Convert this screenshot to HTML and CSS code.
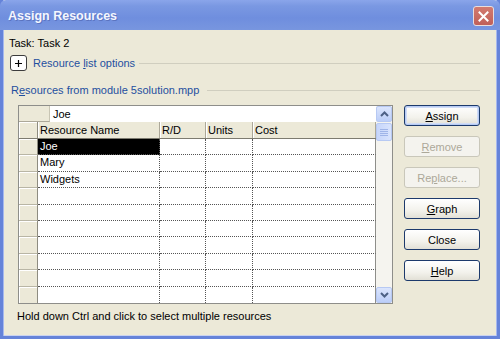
FILE: index.html
```html
<!DOCTYPE html>
<html>
<head>
<meta charset="utf-8">
<link rel="stylesheet" href="styles.css">
</head>
<body>
<div class="window">
  <div class="titlebar">
    <span class="title">Assign Resources</span>
    <span class="close"><svg width="11" height="11" viewBox="0 0 11 11"><path d="M1.5 1.5 L9.5 9.5 M9.5 1.5 L1.5 9.5" stroke="#fff" stroke-width="2" stroke-linecap="square"/></svg></span>
  </div>
  <div class="content">
    <div class="task">Task: Task 2</div>
    <div class="options">
      <span class="plus"><svg width="9" height="9" viewBox="0 0 9 9"><path d="M4.5 1 V8 M1 4.5 H8" stroke="#000" stroke-width="1.2"/></svg></span>
      <span class="link">Resource <u>l</u>ist options</span>
      <span class="rule"></span>
    </div>
    <div class="section">
      <span class="link">R<u>e</u>sources from module 5solution.mpp</span>
      <span class="rule"></span>
    </div>
    <div class="main">
      <div class="left">
        <div class="grid">
          <div class="table">
            <div class="editrow"><span class="corner"></span><span class="edit">Joe</span></div>
            <div class="headrow">
              <span class="rh"></span>
              <span class="hc c-name">Resource Name</span>
              <span class="hc c-rd">R/D</span>
              <span class="hc c-units">Units</span>
              <span class="hc c-cost">Cost</span>
            </div>
            <div class="row"><span class="rh"></span><span class="cell c-name sel">Joe</span><span class="cell c-rd"></span><span class="cell c-units"></span><span class="cell c-cost"></span></div>
            <div class="row"><span class="rh"></span><span class="cell c-name">Mary</span><span class="cell c-rd"></span><span class="cell c-units"></span><span class="cell c-cost"></span></div>
            <div class="row"><span class="rh"></span><span class="cell c-name">Widgets</span><span class="cell c-rd"></span><span class="cell c-units"></span><span class="cell c-cost"></span></div>
            <div class="row"><span class="rh"></span><span class="cell c-name"></span><span class="cell c-rd"></span><span class="cell c-units"></span><span class="cell c-cost"></span></div>
            <div class="row"><span class="rh"></span><span class="cell c-name"></span><span class="cell c-rd"></span><span class="cell c-units"></span><span class="cell c-cost"></span></div>
            <div class="row"><span class="rh"></span><span class="cell c-name"></span><span class="cell c-rd"></span><span class="cell c-units"></span><span class="cell c-cost"></span></div>
            <div class="row"><span class="rh"></span><span class="cell c-name"></span><span class="cell c-rd"></span><span class="cell c-units"></span><span class="cell c-cost"></span></div>
            <div class="row"><span class="rh"></span><span class="cell c-name"></span><span class="cell c-rd"></span><span class="cell c-units"></span><span class="cell c-cost"></span></div>
            <div class="row"><span class="rh"></span><span class="cell c-name"></span><span class="cell c-rd"></span><span class="cell c-units"></span><span class="cell c-cost"></span></div>
            <div class="row last"><span class="rh"></span><span class="cell c-name"></span><span class="cell c-rd"></span><span class="cell c-units"></span><span class="cell c-cost"></span></div>
          </div>
          <div class="scrollbar">
            <span class="sbtn"><svg width="9" height="6" viewBox="0 0 9 6"><path d="M1 5 L4.5 1.5 L8 5" fill="none" stroke="#4d6185" stroke-width="2"/></svg></span>
            <span class="thumb"><i></i><i></i><i></i><i></i></span>
            <span class="track"></span>
            <span class="sbtn"><svg width="9" height="6" viewBox="0 0 9 6"><path d="M1 1 L4.5 4.5 L8 1" fill="none" stroke="#4d6185" stroke-width="2"/></svg></span>
          </div>
        </div>
        <div class="hint">Hold down Ctrl and click to select multiple resources</div>
      </div>
      <div class="buttons">
        <button class="btn default"><u>A</u>ssign</button>
        <button class="btn disabled"><u>R</u>emove</button>
        <button class="btn disabled">Re<u>p</u>lace...</button>
        <button class="btn"><u>G</u>raph</button>
        <button class="btn">Close</button>
        <button class="btn"><u>H</u>elp</button>
      </div>
    </div>
  </div>
</div>
</body>
</html>
```

FILE: styles.css
```css
* { box-sizing: border-box; }
html, body { margin: 0; padding: 0; }
body {
  width: 500px;
  height: 339px;
  overflow: hidden;
  font-family: "Liberation Sans", Arial, sans-serif;
  font-size: 11px;
  color: #000;
  background: #ece9d8;
}
.window {
  width: 500px;
  height: 339px;
  display: flex;
  flex-direction: column;
  border: 3px solid #6583d9;
  border-top: 0;
  background: #ece9d8;
  box-shadow: inset 1px 0 0 #a6b8ee, inset -1px 0 0 #a6b8ee, inset 0 -1px 0 #c9d2f0;
}
.titlebar {
  height: 30px;
  margin: 0 -3px;
  display: flex;
  align-items: center;
  justify-content: space-between;
  padding: 0 6px 0 8px;
  background: linear-gradient(#8aa5ea 0%, #7a98e2 20%, #6f8ede 60%, #7896df 100%);
  border-radius: 6px 6px 0 0;
}
.title {
  color: #f4f6ff;
  font-weight: bold;
  font-size: 12.5px;
  text-shadow: 1px 1px 0 #5b74c0;
  margin-top: 1px;
}
.close {
  width: 21px;
  height: 20px;
  border: 1px solid #e8dede;
  border-radius: 3px;
  background: linear-gradient(#d27a70, #c06058);
  display: flex;
  align-items: center;
  justify-content: center;
  margin-top: 2px;
}
.content {
  flex: 1;
  padding: 6px 8px 0 6px;
  display: flex;
  flex-direction: column;
}
.task { line-height: 14px; height: 14px; }
.options {
  margin-top: 4px;
  height: 18px;
  display: flex;
  align-items: center;
}
.plus {
  width: 17px;
  height: 16px;
  margin-left: 1px;
  border: 1px solid #3c3c3c;
  border-radius: 3px;
  background: #fff;
  display: flex;
  align-items: center;
  justify-content: center;
}
.link { color: #1f4f9f; white-space: nowrap; }
.options .link { margin-left: 6px; }
.rule {
  flex: 1;
  height: 1px;
  background: #d0cebf;
  margin: 0 9px 0 4px;
}
.section {
  margin-top: 9px;
  height: 18px;
  display: flex;
  align-items: center;
  padding-left: 2px;
}
.section .rule { margin-left: 8px; }
.main {
  margin-top: 6px;
  display: flex;
}
.left {
  margin-left: 9px;
  width: 375px;
}
.grid {
  width: 375px;
  height: 199px;
  border: 1px solid #8e8e8a;
  display: flex;
  background: #fff;
}
.table { width: 357px; display: flex; flex-direction: column; }
.editrow { height: 16px; display: flex; }
.corner {
  width: 31px;
  background: #ece9d8;
  border-right: 1px solid #c8c5b4;
  border-bottom: 1px solid #aca899;
}
.edit { flex: 1; padding-left: 3px; line-height: 16px; background: #fff; }
.headrow { height: 17px; display: flex; background: #ece9d8; border-bottom: 1px solid #7d7b70; }
.rh {
  width: 19px;
  flex: none;
  background: #ece9d8;
  border-right: 1px solid #8e8c80;
  border-bottom: 1px solid #b9b6a5;
  box-shadow: inset 1px 1px 0 #fff;
}
.hc {
  line-height: 16px;
  padding-left: 2px;
  border-right: 1px solid #aca899;
  box-shadow: inset 1px 0 0 #fff;
  white-space: nowrap;
}
.headrow .rh { border-bottom: 0; }
.c-name { width: 122px; }
.c-rd { width: 46px; }
.c-units { width: 47px; }
.c-cost { width: 123px; }
.row { height: 16.5px; display: flex; }
.cell {
  border-right: 1px dotted #555;
  border-bottom: 1px dotted #555;
  padding-left: 2px;
  line-height: 15px;
  white-space: nowrap;
}
.cell.c-cost { border-right: 1px solid #8e8e8a; }
.row.last .cell { border-bottom: 0; }
.row.last .rh { border-bottom: 0; }
.sel { background: #000; color: #fff; }
.scrollbar {
  width: 16px;
  display: flex;
  flex-direction: column;
  background: #f5f4ef;
}
.sbtn {
  height: 16px;
  border: 1px solid #b7c9f3;
  border-radius: 2px;
  background: linear-gradient(#dbe5fd, #bccef8);
  display: flex;
  align-items: center;
  justify-content: center;
}
.thumb {
  height: 18px;
  margin-top: 1px;
  border: 1px solid #b7c9f3;
  border-radius: 2px;
  background: linear-gradient(90deg, #c7d6fb, #d8e3fd);
  display: flex;
  flex-direction: column;
  align-items: center;
  justify-content: center;
  gap: 1px;
}
.thumb i { display: block; width: 8px; height: 1px; background: #eef3ff; border-bottom: 1px solid #9fb4e8; }
.track { flex: 1; }
.hint { margin-top: 5px; line-height: 14px; margin-left: -1px; }
.buttons {
  margin-left: 11px;
  display: flex;
  flex-direction: column;
  gap: 10px;
}
.btn {
  width: 76px;
  height: 21px;
  padding: 0;
  font-family: inherit;
  font-size: 11px;
  color: #000;
  border: 1px solid #1d3a6c;
  border-radius: 3px;
  background: linear-gradient(#ffffff, #f3f2ec 60%, #e2e0d6);
}
.btn.default { box-shadow: inset 0 0 0 1px #b7cbf3, inset 0 0 0 2px #d0dcf7; }
.btn.disabled {
  color: #aca899;
  border-color: #c9c7ba;
  background: #f4f3ee;
}
```
